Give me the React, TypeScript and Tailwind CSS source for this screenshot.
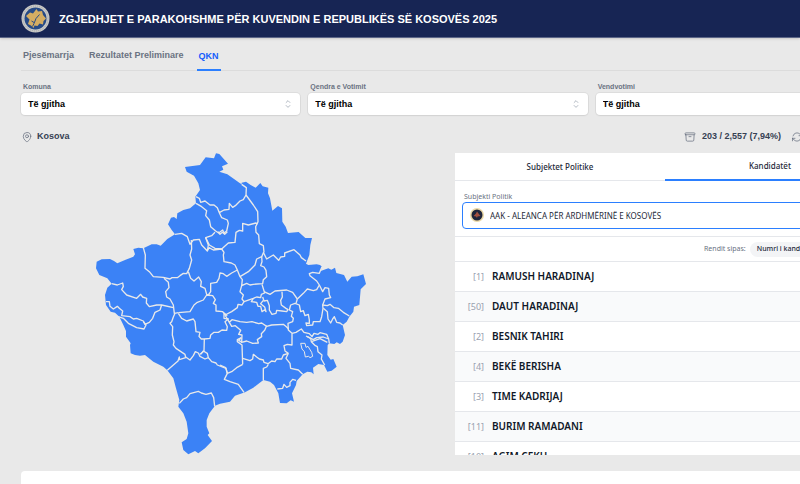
import { useState } from "react";
import {
  HiOutlineArchiveBox,
  HiOutlineArrowPath,
  HiOutlineChevronUpDown,
  HiOutlineMapPin,
} from "react-icons/hi2";

const navItems = ["Pjesëmarrja", "Rezultatet Preliminare", "QKN"];

const filters = [
  { id: "komuna", label: "Komuna" },
  { id: "qendra", label: "Qendra e Votimit" },
  { id: "vendvotimi", label: "Vendvotimi" },
];

const candidates = [
  { number: 1, name: "RAMUSH HARADINAJ" },
  { number: 50, name: "DAUT HARADINAJ" },
  { number: 2, name: "BESNIK TAHIRI" },
  { number: 4, name: "BEKË BERISHA" },
  { number: 3, name: "TIME KADRIJAJ" },
  { number: 11, name: "BURIM RAMADANI" },
  { number: 10, name: "AGIM ÇEKU" },
];

const country =
  "285,66 330,60 347,37 372,40 378,25 388,27 414,56 396,64 400,74 388,80 412,88 450,115 455,118 455,113 468,110 482,120 497,128 511,114 518,124 535,128 534,145 540,160 547,197 564,183 576,190 577,230 587,245 594,264 626,261 646,279 666,279 661,300 658,330 648,356 655,360 680,358 690,360 696,365 692,378 715,370 724,374 735,368 739,384 762,390 772,410 785,395 802,394 820,388 828,417 812,433 808,480 792,485 790,500 778,515 770,530 758,540 765,570 758,590 750,597 740,592 733,597 718,595 713,600 712,630 722,644 730,642 740,665 725,677 712,680 702,660 685,657 669,668 671,688 664,682 652,680 638,688 620,708 618,720 606,745 612,770 602,766 590,775 570,774 565,745 552,720 540,710 520,705 490,728 465,742 435,752 420,770 390,776 375,782 358,805 350,825 350,845 358,865 353,870 366,888 345,910 325,925 315,918 295,928 280,915 275,892 290,882 295,865 290,830 280,805 265,785 268,765 258,730 250,700 232,676 220,665 190,650 165,630 150,632 135,630 122,625 120,600 122,595 108,575 108,558 100,540 88,515 75,503 62,500 48,480 45,450 52,428 65,416 52,400 28,390 18,370 20,350 35,343 60,342 72,348 82,355 105,345 130,335 135,328 130,312 145,308 160,310 185,298 200,298 212,302 232,282 255,268 245,255 234,238 243,218 252,216 260,222 262,205 280,195 300,190 318,175 316,155 330,135 325,115 312,92 290,80";

const borders = [
  "318,155 328,160 332,172 345,168 360,180 372,180 382,188 388,203 402,195 417,193 418,175 428,187 436,182 450,168 460,164 468,150 469,128 455,118",
  "318,175 335,185 350,197 347,212 358,225 362,245 377,258 386,264 398,255 402,264 410,258 415,235 412,225 395,218 388,203",
  "384,260 390,268 397,262 404,268 412,260",
  "255,268 275,265 292,275 300,298 310,285 328,283 335,300 352,318 355,300 347,278 365,272 375,262",
  "347,278 358,300 375,310 395,312 415,294 435,292 438,262 448,256 458,258 458,235 475,240 498,234 502,238",
  "468,150 490,180 503,200 504,230 497,245 498,262 506,270 508,296 520,302 522,322",
  "160,308 166,330 165,370 178,380 190,395 220,397 240,402 246,398 262,398 270,392 280,385 290,386 298,370 305,345 300,330 305,312 304,285",
  "352,318 357,308 370,315 395,312 402,322 400,330 402,350 424,354 435,360 442,375 450,395",
  "450,395 475,380 495,360 500,342 515,335 521,322",
  "442,375 425,384 410,394 400,386 390,384 387,400 380,412 362,415 362,440 355,450",
  "295,380 302,400 312,408 326,396 334,410 332,424 345,430 350,448 360,452",
  "222,400 235,412 237,428 227,440 230,456 240,462 250,480 253,505 265,503",
  "265,503 300,500 312,480 322,472 340,465 350,450 368,452 376,464 370,475 378,480 378,498 398,500 408,510",
  "65,416 82,420 98,414 100,424 95,434 110,450 140,460 152,448 158,456 170,460 169,474 178,485 200,480 215,480 250,488",
  "215,480 210,495 195,502 188,520 178,532 165,538 160,528 140,520 130,522 120,515 95,512 98,498 88,490 82,484 70,492 60,484 58,470 48,470",
  "85,515 100,520 115,535 140,548 162,552 168,540 160,530",
  "255,505 250,516 245,530 240,535 248,545 247,570 252,590 250,600 258,610 285,628 287,638 268,644 268,636 264,648 250,660 232,676",
  "265,505 275,520 290,528 310,522 315,530 318,560 330,562 327,574 334,582 343,582 342,618 330,628",
  "287,636 300,645 310,632 316,620 325,624 330,634 345,642 355,638 352,625 340,618 332,628",
  "355,638 365,650 378,654 382,660 408,670 412,685",
  "343,582 360,580 362,570 372,562 385,562 396,555 410,556 412,545 405,530 415,522 402,520 402,505 412,512",
  "390,660 407,668 412,685 425,680 440,668 458,658",
  "412,685 403,703 420,710 445,718 462,742",
  "458,658 456,600 442,590 442,584 454,578",
  "458,640 480,647 488,642 490,628 500,636 508,642 520,645 522,652 534,656 545,648 555,650 560,642 575,642 580,630 595,625",
  "535,658 530,666 520,670 520,705",
  "595,625 585,618 582,602 592,598 606,600 606,565",
  "595,625 588,640 600,655 602,670 625,675 638,688",
  "562,732 578,730 582,718 590,727 600,722 600,712 608,703 618,706",
  "520,322 530,342 550,330 566,346 572,336 584,334 584,324 612,314 630,330 634,338 648,348",
  "515,334 516,350 512,362 522,366 528,376 530,395 520,404 518,416 490,418 480,420 470,415 455,422 457,404 450,395",
  "455,422 450,440 460,450 456,462 462,470 490,460 500,456 512,458 514,448 524,444 516,418",
  "462,470 456,480 444,478 442,488 425,500 405,510",
  "522,440 540,448 555,438 590,435 608,442 622,462",
  "576,440 577,456 572,466 574,480 588,490 594,494 590,500 576,498 560,496 558,505 546,508 538,495 538,482 532,466 522,468 518,456",
  "490,460 484,470 500,472 504,484 512,484 516,500 524,494 528,500 524,486 512,476 520,466",
  "622,462 640,445 652,432 670,437 680,434 688,420 680,408 660,392 658,386 668,382 688,385 696,365",
  "688,420 698,440 705,428 716,430 718,450 722,458 705,462 698,480 699,490 695,515 690,530 670,530 668,540 650,542 648,534 658,535 658,525 655,508 645,512 640,497 632,500 628,480 615,475 602,480 598,495 608,500 604,514 610,520 608,530 594,535 595,555 606,565",
  "622,462 618,475",
  "698,480 712,482 720,478 732,488 745,490 760,502 778,513",
  "700,490 712,500 714,522 722,534 728,522 733,515 740,532 750,534 758,540",
  "405,510 418,532 426,524 450,530 470,532 486,530 506,536 515,534 530,544 545,540 580,538 590,546 596,552",
  "418,532 425,544 436,542 452,556 446,568 456,570 455,592 470,588 488,595 505,594 502,584 515,575 514,566 524,556 530,542",
  "454,578 446,586 456,592",
  "606,565 618,562 634,552 642,562 658,566 666,575 672,565 684,568 690,563 710,568 716,582",
  "652,575 670,584 680,578 700,576 716,582 718,595",
  "648,573 662,580 664,590 676,602 682,605 684,620 696,630 694,642 704,660",
  "664,590 690,581 712,592",
  "268,775 280,762 290,758 300,746 325,739 334,744 348,748 364,744 371,758 374,784",
];

const enclave =
  "632,595 645,595 648,607 654,604 665,622 668,634 660,638 656,634 646,636 643,620 636,612";

const Header = () => (
  <header className="border-b border-[#5c6688] bg-[#172554] shadow">
    <div className="flex h-[37px] items-center gap-[9px] px-[21px]">
      {/* Round emblem */}
      <svg viewBox="0 0 58 58" className="h-[29px] w-[29px] shrink-0">
        <circle cx="29" cy="29" r="28" fill="#c9c9c6" />
        <circle cx="29" cy="29" r="25" fill="none" stroke="#a3a6aa" strokeWidth="2" strokeDasharray="2 2" />
        <circle cx="29" cy="29" r="22" fill="#264a87" />
        <path
          d="M10 24L18 17L24 19L31 10L34 15L42 14L44 22L50 29L45 34L44 41L37 39L33 44L27 43L25 48L20 43L14 40L17 31Z"
          fill="#d5ad62"
        />
        <path d="M37 21L30 29L26 39L23 45M21 34L26 37" fill="none" stroke="#264a87" strokeWidth="2" />
      </svg>
      <h1 className="whitespace-nowrap text-[11px] font-bold leading-4 text-white">
        ZGJEDHJET E PARAKOHSHME PËR KUVENDIN E REPUBLIKËS SË KOSOVËS 2025
      </h1>
    </div>
  </header>
);

const Navigation = () => (
  <nav className="flex h-[33px] gap-[11px] border-b border-[#dcdcdc]">
    {navItems.map((item) => (
      <a
        key={item}
        href="#"
        className={
          item === "QKN"
            ? "-mb-px flex items-center border-b-2 border-blue-500 px-0.5 pt-1.5 text-[9px] font-bold text-blue-600"
            : "flex items-center px-0.5 pt-1 text-[9px] font-bold text-gray-500"
        }
      >
        {item}
      </a>
    ))}
  </nav>
);

const Filters = () => (
  <div className="mt-2.5 grid grid-cols-3 gap-2">
    {filters.map((filter) => (
      <div key={filter.id}>
        <label htmlFor={filter.id} className="block px-0.5 text-[7px] font-bold leading-3 text-gray-500">
          {filter.label}
        </label>
        <div className="relative">
          <select
            id={filter.id}
            className="block h-[22px] w-full appearance-none rounded bg-white px-[7px] pt-0.5 text-[9px] font-bold text-black shadow-xs ring-1 ring-black/5"
          >
            <option>Të gjitha</option>
          </select>
          <HiOutlineChevronUpDown className="pointer-events-none absolute right-1.5 top-[5px] h-3 w-3 text-gray-400" />
        </div>
      </div>
    ))}
  </div>
);

const KosovoMap = () => (
  <svg viewBox="3 24 840 906" className="h-[302px] w-full" role="img" aria-label="Kosova">
    <polygon points={country} fill="#3b82f6" />
    <g fill="none" stroke="#e9e9e9" strokeWidth="4" strokeLinejoin="round">
      {borders.map((points) => (
        <polyline key={points} points={points} />
      ))}
      <polygon points={enclave} strokeWidth="3" />
    </g>
  </svg>
);

const CandidatesPanel = () => {
  const [tab, setTab] = useState("Kandidatët");

  return (
    <section className="h-[302px] overflow-hidden bg-white font-['Noto_Sans',sans-serif]">
      <div className="grid h-7 grid-cols-2 border-b border-gray-200">
        {["Subjektet Politike", "Kandidatët"].map((name) => (
          <button
            key={name}
            onClick={() => setTab(name)}
            className={
              name === tab
                ? "-mb-px border-b-2 border-blue-500 text-[8px] font-medium text-gray-800"
                : "text-[8px] font-medium text-gray-800"
            }
          >
            {name}
          </button>
        ))}
      </div>

      <div className="border-b border-gray-200 px-[7px] pb-[7px] pt-2.5">
        <label htmlFor="subjekti" className="block px-0.5 text-[7px] leading-[11px] text-gray-500">
          Subjekti Politik
        </label>
        <div className="relative">
          <select
            id="subjekti"
            className="block h-[27px] w-full appearance-none rounded border border-blue-500 bg-white pl-[27px] text-[8px] text-gray-800"
          >
            <option>AAK - ALEANCA PËR ARDHMËRINË E KOSOVËS</option>
          </select>
          <svg viewBox="0 0 28 28" className="absolute left-2 top-1.5 h-3.5 w-3.5">
            <circle cx="14" cy="14" r="14" fill="#ecd9a6" />
            <circle cx="14" cy="14" r="11" fill="#20263b" />
            <path d="M7 16L12 11L14 7L17 11L21 16L15 17L14 20L12 17Z" fill="#a3503f" />
          </svg>
        </div>
      </div>

      <div className="flex h-[25px] items-center gap-1 border-b border-gray-200 pl-[249px]">
        <span className="whitespace-nowrap text-[7px] text-gray-500">Rendit sipas:</span>
        <button className="h-[15px] whitespace-nowrap rounded-full bg-gray-100 px-[7px] text-[7px] font-medium text-gray-800">
          Numri i kandidatit
        </button>
      </div>

      <ul>
        {candidates.map((candidate) => (
          <li
            key={candidate.number}
            className="flex h-[30px] items-center gap-2 border-b border-gray-200 text-[10px] odd:bg-white even:bg-gray-50"
          >
            <span className="w-[29px] text-right text-[9px] text-gray-400">[{candidate.number}]</span>
            <span className="font-semibold text-gray-900">{candidate.name}</span>
          </li>
        ))}
      </ul>
    </section>
  );
};

export default function App() {
  return (
    <div className="flex min-h-screen flex-col overflow-hidden bg-[#e9e9e9] font-['Liberation_Sans',Arial,sans-serif]">
      <Header />
      <main className="flex w-[112%] grow flex-col px-[21px]">
        <Navigation />
        <Filters />
        <div className="flex h-[38px] items-center justify-between pt-1.5 text-[9px] font-bold text-gray-700">
          <div className="flex items-center gap-1">
            <HiOutlineMapPin className="h-3 w-3 text-gray-500" />
            Kosova
          </div>
          <div className="flex items-center gap-1.5 pr-[72px]">
            <HiOutlineArchiveBox className="h-3 w-3 text-gray-500" />
            <span>203 / 2,557 (7,94%)</span>
            <button aria-label="Rifresko" className="ml-1">
              <HiOutlineArrowPath className="h-3 w-3 text-gray-500" />
            </button>
          </div>
        </div>
        <div className="grid grid-cols-2 gap-3.5">
          <KosovoMap />
          <CandidatesPanel />
        </div>
        <section className="mt-4 min-h-3 grow rounded-t bg-white" />
      </main>
    </div>
  );
}
